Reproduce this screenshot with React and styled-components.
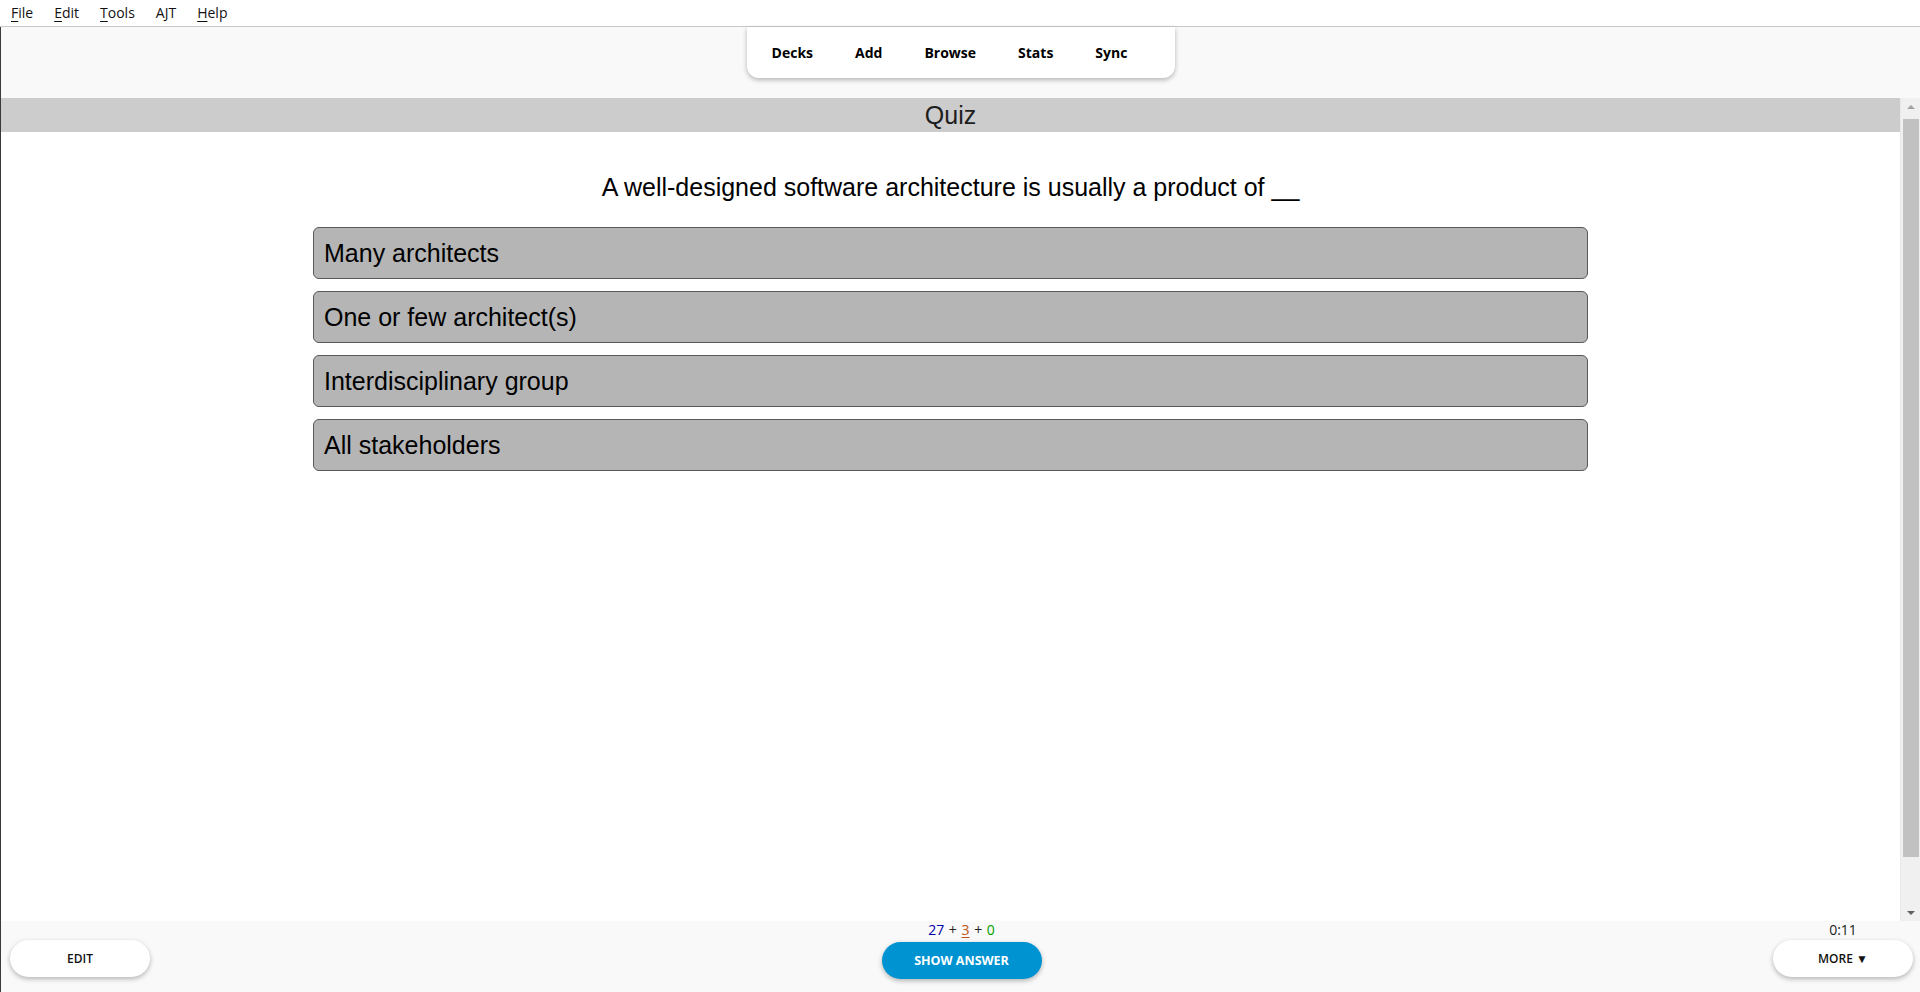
import React from 'react'
import styled, { createGlobalStyle } from 'styled-components'

const GlobalStyle = createGlobalStyle`
  html, body {
    margin: 0;
    padding: 0;
    width: 1920px;
    height: 992px;
    overflow: hidden;
    background: #ffffff;
  }
  * { box-sizing: border-box; }
`

const Window = styled.div`
  width: 1920px;
  height: 992px;
  display: flex;
  flex-direction: column;
  font-family: "Open Sans", "Noto Sans", sans-serif;
  color: #000;
`

const MenuBar = styled.div`
  height: 27px;
  flex: none;
  display: flex;
  align-items: center;
  background: #fff;
  border-bottom: 1px solid #c8c8c8;
  font-size: 14px;
`

const MenuItem = styled.div`
  padding: 0 10px 0 11px;
  line-height: 26px;
  color: #111;
  u { text-decoration-thickness: 1px; text-underline-offset: 3px; }
`

const Body = styled.div`
  flex: 1;
  display: flex;
  flex-direction: column;
  border-left: 1px solid #3a3a3a;
  min-height: 0;
`

const ToolbarArea = styled.div`
  height: 71px;
  flex: none;
  background: #f9f9f9;
  display: flex;
  justify-content: center;
`

const Toolbar = styled.nav`
  height: 51px;
  display: flex;
  align-items: center;
  gap: 42px;
  padding: 0 48px 0 25px;
  background: #fff;
  border-radius: 0 0 12px 12px;
  box-shadow: 0 2px 5px rgba(0, 0, 0, 0.28);
  margin-left: 1px;
`

const ToolLink = styled.span`
  font-size: 14px;
  font-weight: 700;
  color: #000;
`

const WebView = styled.div`
  flex: 1;
  display: flex;
  min-height: 0;
  background: #fff;
`

const Content = styled.div`
  flex: 1;
  display: flex;
  flex-direction: column;
  align-items: center;
  font-family: "Liberation Sans", Arial, sans-serif;
`

const DeckTitle = styled.div`
  align-self: stretch;
  height: 34px;
  background: #cccccc;
  color: #1e1e1e;
  font-size: 25px;
  line-height: 34px;
  text-align: center;
`

const Question = styled.div`
  margin-top: 41px;
  font-size: 25px;
  color: #000;
  text-align: center;
`

const Options = styled.div`
  width: 1275px;
  margin-top: 25px;
  display: flex;
  flex-direction: column;
  gap: 12px;
`

const Option = styled.div`
  background: #b5b5b5;
  border: 1px solid #585858;
  border-radius: 6px;
  padding: 10.5px 10px;
  font-size: 25px;
  color: #000;
`

const Scrollbar = styled.div`
  width: 20px;
  flex: none;
  background: #f0f0f0;
  display: flex;
  flex-direction: column;
  align-items: center;
  border-left: 1px solid #e9e9e9;
`

const ArrowBox = styled.div`
  height: 17px;
  width: 100%;
  display: flex;
  align-items: center;
  justify-content: center;
`

const Arrow = styled.div`
  width: 0;
  height: 0;
  border-left: 4px solid transparent;
  border-right: 4px solid transparent;
  ${({ $down, $color }) =>
    $down
      ? `border-top: 4px solid ${$color};`
      : `border-bottom: 4px solid ${$color};`}
`

const Thumb = styled.div`
  width: 16px;
  height: 738px;
  margin-top: 4px;
  background: #c1c1c1;
`

const Track = styled.div`
  flex: 1;
`

const BottomBar = styled.div`
  height: 71px;
  flex: none;
  background: #f9f9f9;
  display: grid;
  grid-template-columns: 1fr auto 1fr;
  padding: 0 7px 0 9px;
`

const Side = styled.div`
  display: flex;
  flex-direction: column;
  align-items: ${({ $right }) => ($right ? 'flex-end' : 'flex-start')};
  padding-top: ${({ $right }) => ($right ? '0' : '19px')};
`

const Stack = styled.div`
  display: flex;
  flex-direction: column;
  align-items: center;
`

const InfoLine = styled.div`
  font-size: 14px;
  line-height: 17px;
  color: #222;
  word-spacing: 1px;
`

const Count = styled.span`
  color: ${({ $color }) => $color};
  text-decoration: ${({ $current }) => ($current ? 'underline' : 'none')};
  text-underline-offset: 2px;
`

const PillButton = styled.button`
  width: ${({ $wide }) => ($wide ? '160px' : '140px')};
  height: 37px;
  margin-top: ${({ $gap }) => $gap}px;
  border: none;
  border-radius: 19px;
  background: ${({ $primary }) => ($primary ? '#0093d2' : '#ffffff')};
  color: ${({ $primary }) => ($primary ? '#ffffff' : '#111')};
  font-family: "Open Sans", "Noto Sans", sans-serif;
  font-size: ${({ $primary }) => ($primary ? '12.5px' : '12px')};
  font-weight: ${({ $primary }) => ($primary ? 700 : 600)};
  box-shadow: 0 2px 5px rgba(0, 0, 0, 0.28);
  padding: 0;
`

const menus = [
  { key: 'F', rest: 'ile' },
  { key: 'E', rest: 'dit' },
  { key: 'T', rest: 'ools' },
  { key: '', rest: 'AJT' },
  { key: 'H', rest: 'elp' },
]

const tools = ['Decks', 'Add', 'Browse', 'Stats', 'Sync']

const answers = [
  'Many architects',
  'One or few architect(s)',
  'Interdisciplinary group',
  'All stakeholders',
]

const App = () => {
  return (
    <Window>
      <GlobalStyle />
      <MenuBar>
        {menus.map((m) => (
          <MenuItem key={m.rest}>
            {m.key && <u>{m.key}</u>}
            {m.rest}
          </MenuItem>
        ))}
      </MenuBar>
      <Body>
        <ToolbarArea>
          <Toolbar>
            {tools.map((t) => (
              <ToolLink key={t}>{t}</ToolLink>
            ))}
          </Toolbar>
        </ToolbarArea>
        <WebView>
          <Content>
            <DeckTitle>Quiz</DeckTitle>
            <Question>A well-designed software architecture is usually a product of __</Question>
            <Options>
              {answers.map((a) => (
                <Option key={a}>{a}</Option>
              ))}
            </Options>
          </Content>
          <Scrollbar>
            <ArrowBox>
              <Arrow $color="#a3a3a3" />
            </ArrowBox>
            <Thumb />
            <Track />
            <ArrowBox>
              <Arrow $down $color="#606060" />
            </ArrowBox>
          </Scrollbar>
        </WebView>
        <BottomBar>
          <Side>
            <PillButton $gap={0}>EDIT</PillButton>
          </Side>
          <Stack>
            <InfoLine>
              <Count $color="#0000aa">27</Count> + <Count $color="#c35617" $current>3</Count> + <Count $color="#00a000">0</Count>
            </InfoLine>
            <PillButton $primary $wide $gap={4}>SHOW ANSWER</PillButton>
          </Stack>
          <Side $right>
            <Stack>
              <InfoLine>0:11</InfoLine>
              <PillButton $gap={2}>MORE ▼</PillButton>
            </Stack>
          </Side>
        </BottomBar>
      </Body>
    </Window>
  )
}

export default App
